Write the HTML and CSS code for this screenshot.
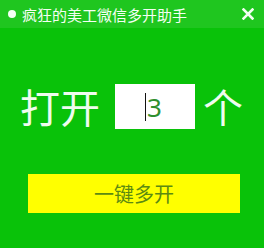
FILE: index.html
```html
<!DOCTYPE html>
<html>
  <head>
    <meta charset="UTF-8">
    <link rel="stylesheet" href="styles.css">
  </head>
  <body>
    <div class="window">
      <div class="titlebar">
        <span class="dot"></span>
        <span class="title">疯狂的美工微信多开助手</span>
        <svg class="close" width="12" height="12" viewBox="0 0 12 12">
          <path d="M1.5 1.5 L10.5 10.5 M10.5 1.5 L1.5 10.5" stroke="#f2fff2" stroke-width="2.6" stroke-linecap="square"/>
        </svg>
      </div>
      <div class="count-row">
        <span class="label">打开</span>
        <div class="count-box"><span class="caret"></span><span class="num">3</span></div>
        <span class="label unit">个</span>
      </div>
      <button class="open-btn">一键多开</button>
    </div>
  </body>
</html>
```

FILE: styles.css
```css
body {
  margin: 0;
  overflow: hidden;
  font-family: "Noto Sans CJK SC", "Noto Sans", sans-serif;
}
.window {
  width: 264px;
  height: 248px;
  background: #09c209;
  display: flex;
  flex-direction: column;
}
.titlebar {
  height: 28px;
  background: #1fc61f;
  display: flex;
  align-items: center;
  padding: 0 10px 0 8px;
  color: #f4fff4;
}
.dot {
  width: 8px;
  height: 8px;
  border-radius: 50%;
  background: #f4fff4;
  margin-right: 6px;
}
.title {
  font-size: 15px;
  flex: 1;
}
.close {
  display: block;
}
.count-row {
  display: flex;
  align-items: center;
  margin: 56px 0 0 20px;
  height: 45px;
}
.label {
  font-size: 40px;
  line-height: 45px;
  color: #effcef;
}
.count-box {
  width: 80px;
  height: 45px;
  background: #fff;
  margin-left: 15px;
  display: flex;
  align-items: center;
  padding-left: 30px;
  box-sizing: border-box;
}
.caret {
  width: 1px;
  height: 28px;
  background: #111;
  margin-right: 1px;
}
.num {
  font-family: "Noto Sans", sans-serif;
  font-size: 26px;
  color: #2f8f2f;
  line-height: 28px;
}
.unit {
  margin-left: 8px;
}
.open-btn {
  margin: 45px 0 0 28px;
  width: 212px;
  height: 39px;
  border: none;
  background: #ffff00;
  color: #5c8a12;
  font-family: "Noto Sans CJK SC", sans-serif;
  font-size: 20px;
  padding: 0;
}
```
